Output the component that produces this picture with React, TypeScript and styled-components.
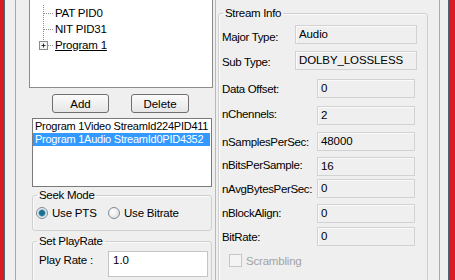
import React from "react";
import styled, { createGlobalStyle } from "styled-components";

const Global = createGlobalStyle`
  html, body { margin: 0; padding: 0; background: #efefef; }
  * { box-sizing: border-box; }
  body { font-family: "Liberation Sans", Arial, sans-serif; font-size: 11px; color: #000; }
`;

const Frame = styled.div`
  width: 455px;
  height: 280px;
  display: flex;
  overflow: hidden;
  background: #efefef;
`;

const RedEdge = styled.div<{ $w: number }>`
  width: ${(p) => p.$w}px;
  flex: none;
  background: #d91c24;
`;

const Line = styled.div<{ $color: string }>`
  width: 1px;
  flex: none;
  background: ${(p) => p.$color};
`;

const Gutter = styled.div<{ $w: number }>`
  width: ${(p) => p.$w}px;
  flex: none;
`;

const LeftPane = styled.div`
  width: 201px;
  flex: none;
  border-left: 1px solid #a8a8a8;
  border-right: 1px solid #b8b8b8;
  display: flex;
  flex-direction: column;
  & > * { flex: none; }
`;

const RightPane = styled.div`
  width: 223px;
  flex: none;
  padding-left: 2px;
  display: flex;
  flex-direction: column;
  & > * { flex: none; }
`;

const TreeBox = styled.div`
  margin-left: 13px;
  width: 184px;
  height: 88px;
  background: #fff;
  border: 1px solid #8c8c8c;
  border-top: none;
  padding: 5px 0 0 6px;
  display: flex;
  flex-direction: column;
`;

const TreeRow = styled.div`
  height: 16px;
  display: flex;
  align-items: center;
`;

const TreeLabel = styled.span<{ $focus?: boolean }>`
  margin-left: 2px;
  line-height: 13px;
  font-size: 11.5px;
  letter-spacing: -0.2px;
  text-decoration: ${(p) => (p.$focus ? "underline" : "none")};
`;

const ButtonRow = styled.div`
  display: flex;
  gap: 22px;
  padding-left: 36px;
  margin-top: 6px;
`;

const Button = styled.button<{ $w: number }>`
  width: ${(p) => p.$w}px;
  height: 19px;
  padding: 0;
  font-family: inherit;
  font-size: 11.5px;
  color: #000;
  border: 1px solid #6f6f6f;
  border-radius: 3px;
  background: linear-gradient(#fbfbfb, #e6e6e6);
`;

const ListBox = styled.div`
  margin: 5px 0 0 16px;
  width: 180px;
  height: 69px;
  background: #fff;
  border: 1px solid #7a7a7a;
  padding-top: 1px;
`;

const ListItem = styled.div<{ $sel?: boolean }>`
  height: 13px;
  line-height: 13px;
  padding-left: 2px;
  margin-right: 1px;
  white-space: nowrap;
  font-size: 11px;
  letter-spacing: -0.25px;
  background: ${(p) => (p.$sel ? "#3399ff" : "transparent")};
  color: ${(p) => (p.$sel ? "#fff" : "#000")};
`;

const Group = styled.fieldset<{ $w: number; $h: number; $mt: number; $ml: number }>`
  margin: ${(p) => p.$mt}px 0 0 ${(p) => p.$ml}px;
  width: ${(p) => p.$w}px;
  height: ${(p) => p.$h}px;
  flex: none;
  padding: 0 0 0 3px;
  border: 1px solid #cfcfcf;
  border-radius: 3px;
  box-shadow: inset 1px 1px 0 #fbfbfb;
  min-width: 0;
`;

const Legend = styled.legend`
  padding: 0 2px;
  margin-left: 1px;
  font-size: 11.5px;
  letter-spacing: -0.3px;
  line-height: 12px;
`;

const RadioRow = styled.div`
  display: flex;
  align-items: center;
  margin-top: 6px;
`;

const RadioItem = styled.label<{ $w: number }>`
  width: ${(p) => p.$w}px;
  display: flex;
  align-items: center;
  gap: 4px;
  font-size: 11.5px;
  letter-spacing: -0.2px;
`;

const RadioCircle = styled.span<{ $on?: boolean }>`
  width: 12px;
  height: 12px;
  border-radius: 50%;
  border: 1px solid #7b8a99;
  background: ${(p) =>
    p.$on
      ? "radial-gradient(circle, #1d6f8f 0 2.5px, #4aa0b8 3px, #e6e6e6 4px, #fff 6px)"
      : "radial-gradient(circle at 35% 35%, #fff, #dadada)"};
`;

const PlayRow = styled.div`
  display: flex;
  align-items: flex-start;
  margin-top: 4px;
  padding-left: 3px;
`;

const PlayLabel = styled.span`
  width: 69px;
  font-size: 11.5px;
  letter-spacing: -0.2px;
  line-height: 15px;
  margin-top: 2px;
`;

const PlayEdit = styled.div`
  width: 100px;
  height: 26px;
  background: #fff;
  border: 1px solid #c4c4c4;
  padding: 2px 0 0 4px;
  font-size: 11.5px;
`;

const InfoRow = styled.div<{ $mt: number }>`
  display: flex;
  align-items: center;
  margin-top: ${(p) => p.$mt}px;
`;

const InfoLabel = styled.span<{ $w: number; $dy?: number }>`
  width: ${(p) => p.$w}px;
  flex: none;
  font-size: 11.5px;
  letter-spacing: -0.35px;
  white-space: nowrap;
  position: relative;
  top: ${(p) => p.$dy ?? 0}px;
`;

const InfoBox = styled.div<{ $w: number }>`
  width: ${(p) => p.$w}px;
  height: 19px;
  flex: none;
  border: 1px solid #d2d2d2;
  box-shadow: inset 1px 1px 0 #fafafa;
  background: #efefef;
  padding-left: 3px;
  line-height: 17px;
  font-size: 11.5px;
  letter-spacing: -0.1px;
  white-space: nowrap;
`;

const CheckRow = styled.div`
  display: flex;
  align-items: center;
  gap: 4px;
  margin: 8px 0 0 7px;
  color: #a3a3a3;
  font-size: 11.5px;
  letter-spacing: -0.2px;
`;

const CheckBox = styled.span`
  width: 13px;
  height: 13px;
  border: 1px solid #c6c6c6;
  background: #f4f4f4;
`;

function Connector({ kind }: { kind: "mid" | "last" }) {
  return (
    <svg width="17" height="16" viewBox="0 0 17 16">
      {kind === "mid" ? (
        <>
          <line x1="7.5" y1="0" x2="7.5" y2="16" stroke="#909090" strokeDasharray="1 1" />
          <line x1="8" y1="8.5" x2="17" y2="8.5" stroke="#909090" strokeDasharray="1 1" />
        </>
      ) : (
        <>
          <line x1="7.5" y1="0" x2="7.5" y2="4" stroke="#909090" strokeDasharray="1 1" />
          <line x1="12" y1="8.5" x2="17" y2="8.5" stroke="#909090" strokeDasharray="1 1" />
          <rect x="3.5" y="4.5" width="8" height="8" fill="#f4f4f4" stroke="#8a8a8a" />
          <line x1="5.5" y1="8.5" x2="9.5" y2="8.5" stroke="#303030" />
          <line x1="7.5" y1="6.5" x2="7.5" y2="10.5" stroke="#303030" />
        </>
      )}
    </svg>
  );
}

const infoRows: { label: string; value: string; mt: number; lw: number; bw: number; dy?: number }[] = [
  { label: "Major Type:", value: "Audio", mt: 0, lw: 73, bw: 122, dy: 2 },
  { label: "Sub Type:", value: "DOLBY_LOSSLESS", mt: 7, lw: 73, bw: 122, dy: 1 },
  { label: "Data Offset:", value: "0", mt: 9, lw: 95, bw: 98 },
  { label: "nChennels:", value: "2", mt: 8, lw: 95, bw: 98, dy: -2 },
  { label: "nSamplesPerSec:", value: "48000", mt: 7, lw: 95, bw: 98 },
  { label: "nBitsPerSample:", value: "16", mt: 6, lw: 95, bw: 98, dy: -2 },
  { label: "nAvgBytesPerSec:", value: "0", mt: 3, lw: 95, bw: 98 },
  { label: "nBlockAlign:", value: "0", mt: 6, lw: 95, bw: 98, dy: -1 },
  { label: "BitRate:", value: "0", mt: 4, lw: 95, bw: 98 },
];

export default function App() {
  return (
    <>
      <Global />
      <Frame>
        <RedEdge $w={4} />
        <Line $color="#4d6276" />
        <Gutter $w={10} />
        <LeftPane>
          <TreeBox>
            <TreeRow>
              <Connector kind="mid" />
              <TreeLabel>PAT PID0</TreeLabel>
            </TreeRow>
            <TreeRow>
              <Connector kind="mid" />
              <TreeLabel>NIT PID31</TreeLabel>
            </TreeRow>
            <TreeRow>
              <Connector kind="last" />
              <TreeLabel $focus>Program 1</TreeLabel>
            </TreeRow>
          </TreeBox>
          <ButtonRow>
            <Button $w={57}>Add</Button>
            <Button $w={58}>Delete</Button>
          </ButtonRow>
          <ListBox>
            <ListItem>Program 1Video StreamId224PID411</ListItem>
            <ListItem $sel>Program 1Audio StreamId0PID4352</ListItem>
          </ListBox>
          <Group $w={180} $h={42} $mt={2} $ml={16}>
            <Legend>Seek Mode</Legend>
            <RadioRow>
              <RadioItem $w={72}>
                <RadioCircle $on />
                Use PTS
              </RadioItem>
              <RadioItem $w={90}>
                <RadioCircle />
                Use Bitrate
              </RadioItem>
            </RadioRow>
          </Group>
          <Group $w={180} $h={60} $mt={4} $ml={16}>
            <Legend>Set PlayRate</Legend>
            <PlayRow>
              <PlayLabel>Play Rate :</PlayLabel>
              <PlayEdit>1.0</PlayEdit>
            </PlayRow>
          </Group>
        </LeftPane>
        <RightPane>
          <Group $w={210} $h={290} $mt={7} $ml={0}>
            <Legend>Stream Info</Legend>
            <div style={{ height: 6 }} />
            {infoRows.map((r) => (
              <InfoRow key={r.label} $mt={r.mt}>
                <InfoLabel $w={r.lw} $dy={r.dy}>
                  {r.label}
                </InfoLabel>
                <InfoBox $w={r.bw}>{r.value}</InfoBox>
              </InfoRow>
            ))}
            <CheckRow>
              <CheckBox />
              Scrambling
            </CheckRow>
          </Group>
        </RightPane>
        <Line $color="#a9a9a9" />
        <Gutter $w={8} />
        <Line $color="#4d6276" />
        <RedEdge $w={6} />
      </Frame>
    </>
  );
}
